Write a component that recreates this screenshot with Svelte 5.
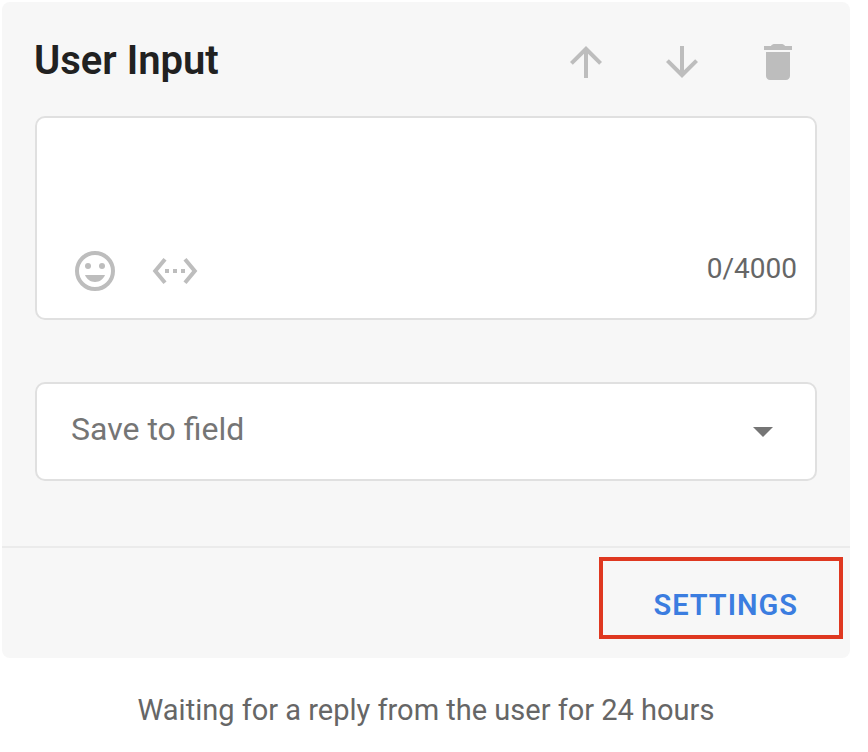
<script lang="ts">
	const maxLength = 4000;

	let message = $state('');
	let field = $state('');
</script>

<main class="block">
	<section class="card">
		<header class="card-header">
			<h2>User Input</h2>
			<div class="actions">
				<button class="icon-button" type="button" aria-label="Move up">
					<svg viewBox="0 0 24 24"><path d="M4 12l1.41 1.41L11 7.83V20h2V7.83l5.58 5.59L20 12l-8-8-8 8z" /></svg>
				</button>
				<button class="icon-button" type="button" aria-label="Move down">
					<svg viewBox="0 0 24 24"><path d="M20 12l-1.41-1.41L13 16.17V4h-2v12.17l-5.58-5.59L4 12l8 8 8-8z" /></svg>
				</button>
				<button class="icon-button" type="button" aria-label="Delete">
					<svg viewBox="0 0 24 24"><path d="M6 19c0 1.1.9 2 2 2h8c1.1 0 2-.9 2-2V7H6v12zM19 4h-3.5c-.3-.7-1.2-1-2-1h-3c-.8 0-1.7.3-2 1H5v2h14V4z" /></svg>
				</button>
			</div>
		</header>

		<div class="card-body">
			<div class="message">
				<textarea aria-label="Message" maxlength={maxLength} bind:value={message}></textarea>
				<div class="toolbar">
					<button class="icon-button" type="button" aria-label="Insert emoji">
						<svg viewBox="0 0 24 24">
							<circle cx="12" cy="12" r="9" fill="none" stroke="currentColor" stroke-width="2" />
							<circle cx="8.5" cy="9.5" r="1.5" />
							<circle cx="15.5" cy="9.5" r="1.5" />
							<path d="M7 14c.8 2.1 2.7 3.5 5 3.5s4.2-1.4 5-3.5H7z" />
						</svg>
					</button>
					<button class="icon-button" type="button" aria-label="Insert variable">
						<svg viewBox="0 0 24 24"><path d="M7.77 6.76L6.23 5.48.82 12l5.41 6.52 1.54-1.28L3.42 12l4.35-5.24zM7 13h2v-2H7v2zm10-2h-2v2h2v-2zm-6 2h2v-2h-2v2zm6.77-7.52l-1.54 1.28L20.58 12l-4.35 5.24 1.54 1.28L23.18 12l-5.41-6.52z" /></svg>
					</button>
					<span class="counter">{message.length}/{maxLength}</span>
				</div>
			</div>

			<div class="field">
				<select aria-label="Save to field" bind:value={field}>
					<option value="">Save to field</option>
				</select>
				<svg class="caret" viewBox="0 0 20 10"><path d="M0 0h20L10 10z" /></svg>
			</div>
		</div>

		<footer class="card-footer">
			<button class="settings" type="button">SETTINGS</button>
		</footer>
	</section>

	<p class="status">Waiting for a reply from the user for 24 hours</p>
</main>

<style>
	:global(body) {
		margin: 0;
		background: #fff;
	}

	.block {
		padding: 2px 18px 0 2px;
		font-family: Roboto, sans-serif;
		color: #666;
	}

	.card {
		background: #f7f7f7;
		border-radius: 8px;
	}

	.card-header {
		display: flex;
		align-items: flex-start;
		justify-content: space-between;
		padding: 36px 48px 0 32px;
	}

	h2 {
		margin: 0;
		font-size: 40px;
		line-height: 46px;
		font-weight: 600;
		color: #212121;
	}

	.actions {
		display: flex;
		gap: 48px;
	}

	.icon-button {
		width: 48px;
		height: 48px;
		padding: 0;
		border: 0;
		background: none;
		color: #bdbdbd;
		cursor: pointer;
	}

	.icon-button svg {
		display: block;
		width: 48px;
		height: 48px;
		fill: currentColor;
	}

	.card-body {
		display: flex;
		flex-direction: column;
		gap: 62px;
		padding: 30px 33px 65px;
	}

	.message {
		padding: 16px 18px 23px 34px;
		background: #fff;
		border: 2px solid #e0e0e0;
		border-radius: 10px;
	}

	textarea {
		display: block;
		box-sizing: border-box;
		width: 100%;
		height: 113px;
		padding: 0;
		border: 0;
		outline: 0;
		resize: none;
		background: none;
		font: inherit;
		font-size: 32px;
		line-height: 40px;
	}

	.toolbar {
		display: flex;
		align-items: center;
		gap: 32px;
	}

	.counter {
		margin-left: auto;
		padding-bottom: 4px;
		font-size: 28px;
		line-height: 32px;
	}

	.field {
		position: relative;
	}

	select {
		display: block;
		box-sizing: border-box;
		width: 100%;
		padding: 25px 80px 30px 34px;
		appearance: none;
		background: #fff;
		border: 2px solid #e0e0e0;
		border-radius: 10px;
		font-family: inherit;
		font-size: 32px;
		line-height: 40px;
		color: #757575;
	}

	.caret {
		position: absolute;
		top: 45px;
		right: 44px;
		width: 20px;
		height: 10px;
		fill: #757575;
		pointer-events: none;
	}

	.card-footer {
		display: flex;
		justify-content: flex-end;
		padding: 9px 7px 19px;
		border-top: 2px solid #ebebeb;
	}

	.settings {
		padding: 27px 41px 13px 50px;
		border: 4px solid #df3820;
		background: none;
		font-family: inherit;
		font-size: 29px;
		line-height: 34px;
		font-weight: 600;
		letter-spacing: 1px;
		color: #3b7de0;
		cursor: pointer;
	}

	.status {
		margin: 35px 0 0;
		font-size: 29px;
		line-height: 34px;
		text-align: center;
	}
</style>
